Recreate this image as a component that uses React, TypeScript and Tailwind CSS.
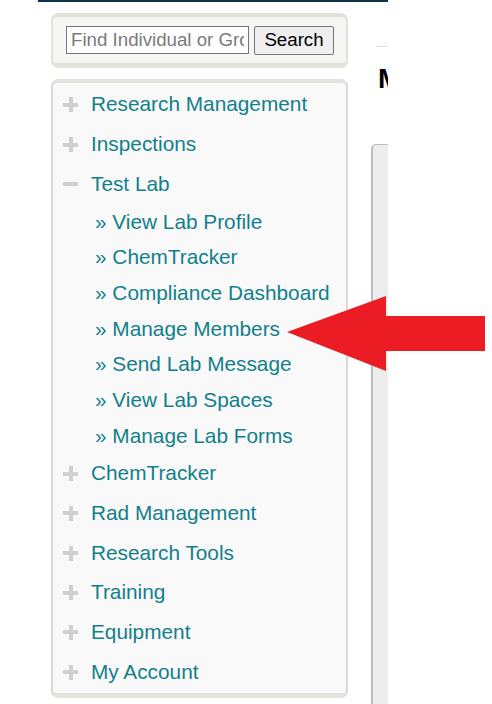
import { useState } from "react";

const font = { fontFamily: '"Liberation Sans", Arial, sans-serif' };

const topItems = ["Research Management", "Inspections"];
const labLinks = [
  "View Lab Profile",
  "ChemTracker",
  "Compliance Dashboard",
  "Manage Members",
  "Send Lab Message",
  "View Lab Spaces",
  "Manage Lab Forms",
];
const bottomItems = [
  "ChemTracker",
  "Rad Management",
  "Research Tools",
  "Training",
  "Equipment",
  "My Account",
];

function PlusIcon() {
  return (
    <span className="relative block w-[15px] h-[15px] shrink-0">
      <span className="absolute left-0 top-[5.5px] w-[15px] h-[4px] bg-[#d0d0d0]" />
      <span className="absolute top-0 left-[5.5px] w-[4px] h-[15px] bg-[#d0d0d0]" />
    </span>
  );
}

function MinusIcon() {
  return (
    <span className="relative block w-[15px] h-[15px] shrink-0">
      <span className="absolute left-0 top-[5.5px] w-[15px] h-[4px] bg-[#d0d0d0]" />
    </span>
  );
}

function TopRow({ label, open }: { label: string; open?: boolean }) {
  return (
    <li className="flex items-center h-[39.7px] pl-[10px] gap-[13px]">
      {open ? <MinusIcon /> : <PlusIcon />}
      <a className="text-[20.8px] text-[#11808b] leading-none">{label}</a>
    </li>
  );
}

export default function App() {
  const [query, setQuery] = useState("");

  return (
    <div className="relative w-[492px] h-[704px] bg-white overflow-hidden" style={font}>
      <div className="ml-[38px] w-[350px] h-full overflow-hidden">
        {/* header strip */}
        <div className="h-[2px] bg-[#0e3447]" />

        <div className="flex">
          {/* sidebar */}
          <div className="ml-[13px] w-[297px] shrink-0 pt-[11px]">
            <div className="rounded-[7px] border-x-2 border-t-[4px] border-b-[5px] border-[#e2e2dc] bg-[#f6f6f4] pl-[13px] pt-[9px] pb-[8px] flex gap-[5px]">
              <input
                value={query}
                onChange={(e) => setQuery(e.target.value)}
                placeholder="Find Individual or Group"
                className="w-[183px] h-[28px] border border-[#767676] bg-white px-[4px] text-[18.7px] text-black placeholder:text-[#7a7a7a] outline-none"
                style={font}
              />
              <button
                className="w-[80px] h-[29px] border border-[#767676] rounded-[2px] bg-[#efefef] text-[18.7px] text-black leading-none"
                style={font}
              >
                Search
              </button>
            </div>

            <ul className="mt-[11px] rounded-[7px] border-x-2 border-t-[4px] border-b-[5px] border-[#e2e2dc] border-l-[#d8d8d8] border-r-[#d8d8d8] bg-[#f9f9f9] pt-[2px] pb-[1px]">
              {topItems.map((t) => (
                <TopRow key={t} label={t} />
              ))}
              <TopRow label="Test Lab" open />
              {labLinks.map((t) => (
                <li key={t} className="flex items-center h-[35.7px] pl-[42px]">
                  <a className="text-[20.8px] text-[#11808b] leading-none whitespace-nowrap">
                    » {t}
                  </a>
                </li>
              ))}
              {bottomItems.map((t) => (
                <TopRow key={t} label={t} />
              ))}
            </ul>
          </div>

          {/* main column, cut off on the right */}
          <div className="ml-[23px] w-[400px] shrink-0">
            <div className="mt-[44px] ml-[6px] border-t border-[#dddddd]" />
            <h1 className="mt-[18px] ml-[7px] text-[28px] font-bold text-black leading-none whitespace-nowrap">
              Manage Members
            </h1>
            <div className="mt-[51px] h-[600px] rounded-tl-[5px] border-l-2 border-t border-[#bdbdbd] bg-[#ededed]" />
          </div>
        </div>
      </div>

      {/* annotation arrow */}
      <svg className="absolute left-0 top-0" width="492" height="704" viewBox="0 0 492 704">
        <polygon
          points="287,332 386,296 386,316 485,316 485,351 386,351 386,371"
          fill="#ec1c24"
        />
      </svg>
    </div>
  );
}
